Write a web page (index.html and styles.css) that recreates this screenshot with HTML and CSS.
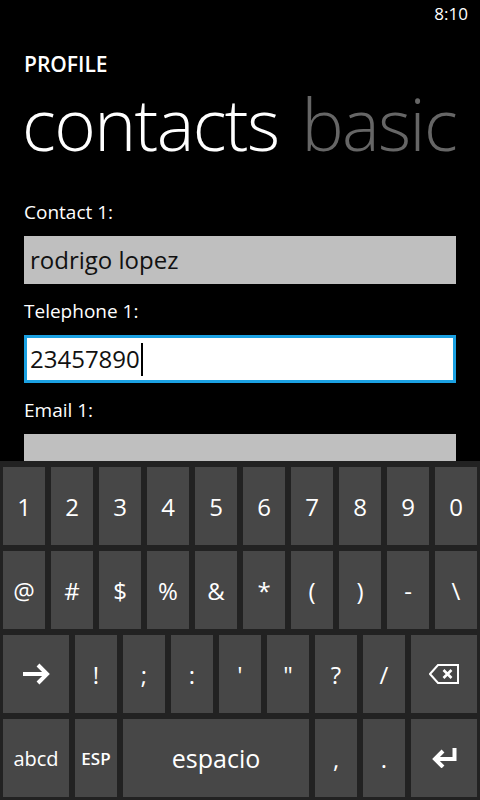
FILE: index.html
```html
<!DOCTYPE html>
<html>
<head>
<meta charset="utf-8">
<link rel="stylesheet" href="styles.css">
</head>
<body>
<div class="screen">
  <div class="main">
    <div class="status"><span class="clock">8:10</span></div>
    <div class="app-title">PROFILE</div>
    <div class="pivot">
      <span class="pivot-item active">contacts</span>
      <span class="pivot-item">basic</span>
    </div>
    <div class="form">
      <div class="label first">Contact 1:</div>
      <div class="field">rodrigo lopez</div>
      <div class="label">Telephone 1:</div>
      <div class="field focused">23457890<span class="caret"></span></div>
      <div class="label">Email 1:</div>
      <div class="field"></div>
    </div>
  </div>
  <div class="keyboard">
    <div class="row">
      <div class="key">1</div><div class="key">2</div><div class="key">3</div><div class="key">4</div><div class="key">5</div>
      <div class="key">6</div><div class="key">7</div><div class="key">8</div><div class="key">9</div><div class="key">0</div>
    </div>
    <div class="row">
      <div class="key">@</div><div class="key">#</div><div class="key">$</div><div class="key">%</div><div class="key">&amp;</div>
      <div class="key">*</div><div class="key">(</div><div class="key">)</div><div class="key">-</div><div class="key">\</div>
    </div>
    <div class="row">
      <div class="key wide">
        <svg width="30" height="24" viewBox="0 0 30 24"><path d="M2 12 H26 M17 3 L26 12 L17 21" fill="none" stroke="#fff" stroke-width="4"/></svg>
      </div>
      <div class="key">!</div><div class="key">;</div><div class="key">:</div><div class="key">'</div>
      <div class="key">"</div><div class="key">?</div><div class="key">/</div>
      <div class="key wide">
        <svg width="30" height="20" viewBox="0 0 30 20"><path d="M9 1 H29 V19 H9 L1 10 Z" fill="none" stroke="#fff" stroke-width="2"/><path d="M14.5 6 L22.5 14 M22.5 6 L14.5 14" fill="none" stroke="#fff" stroke-width="2.6"/></svg>
      </div>
    </div>
    <div class="row">
      <div class="key wide small">abcd</div>
      <div class="key esp">ESP</div>
      <div class="key space">espacio</div>
      <div class="key">,</div>
      <div class="key">.</div>
      <div class="key wide">
        <svg width="26" height="20" viewBox="0 0 26 20"><path d="M23.5 0 V11 H4" fill="none" stroke="#fff" stroke-width="4"/><path d="M12 3 L4 11 L12 19" fill="none" stroke="#fff" stroke-width="4"/></svg>
      </div>
    </div>
  </div>
</div>
</body>
</html>
```

FILE: styles.css
```css
html, body {
  margin: 0;
  padding: 0;
  background: #000;
}
.screen {
  width: 480px;
  height: 800px;
  display: flex;
  flex-direction: column;
  overflow: hidden;
  font-family: "Open Sans", "Noto Sans", sans-serif;
  color: #fff;
}
.main {
  flex: 1;
  overflow: hidden;
  min-height: 0;
}
.status {
  height: 32px;
  box-sizing: border-box;
  padding: 4px 12px 0 0;
  display: flex;
  justify-content: flex-end;
  font-size: 17px;
  line-height: 20px;
}
.app-title {
  margin: 20px 0 0 24px;
  font-size: 21px;
  line-height: 24px;
  font-weight: 600;
}
.pivot {
  margin: 0 0 0 22px;
  font-size: 71px;
  line-height: 96px;
  font-weight: 300;
  letter-spacing: -1.6px;
  white-space: nowrap;
  display: flex;
  gap: 23px;
}
.pivot-item { color: #666; }
.pivot-item.active { color: #fff; }
.form {
  padding: 0 24px;
}
.label {
  margin-top: 15px;
  font-size: 19px;
  line-height: 24px;
}
.label.first { margin-top: 28px; }
.field {
  margin-top: 12px;
  height: 48px;
  box-sizing: border-box;
  background: #bfbfbf;
  color: #111;
  font-size: 24px;
  line-height: 48px;
  padding-left: 6px;
  display: flex;
  align-items: center;
}
.field.focused {
  background: #fff;
  border: 3px solid #1ba1e2;
  padding-left: 3px;
  line-height: 42px;
}
.caret {
  display: inline-block;
  width: 2px;
  height: 33px;
  background: #000;
  margin-left: 1px;
}
.keyboard {
  flex: none;
  background: #222;
  padding: 6px 3px 3px;
  display: flex;
  flex-direction: column;
  gap: 6px;
}
.row {
  display: flex;
  gap: 6px;
  height: 78px;
}
.key {
  width: 42px;
  background: #474747;
  display: flex;
  align-items: center;
  justify-content: center;
  font-size: 24px;
  color: #fff;
}
.key.wide { width: 66px; }
.key.space { width: 186px; font-size: 25px; }
.key.small { font-size: 20px; }
.key.esp { font-size: 17px; font-weight: 600; }
```
